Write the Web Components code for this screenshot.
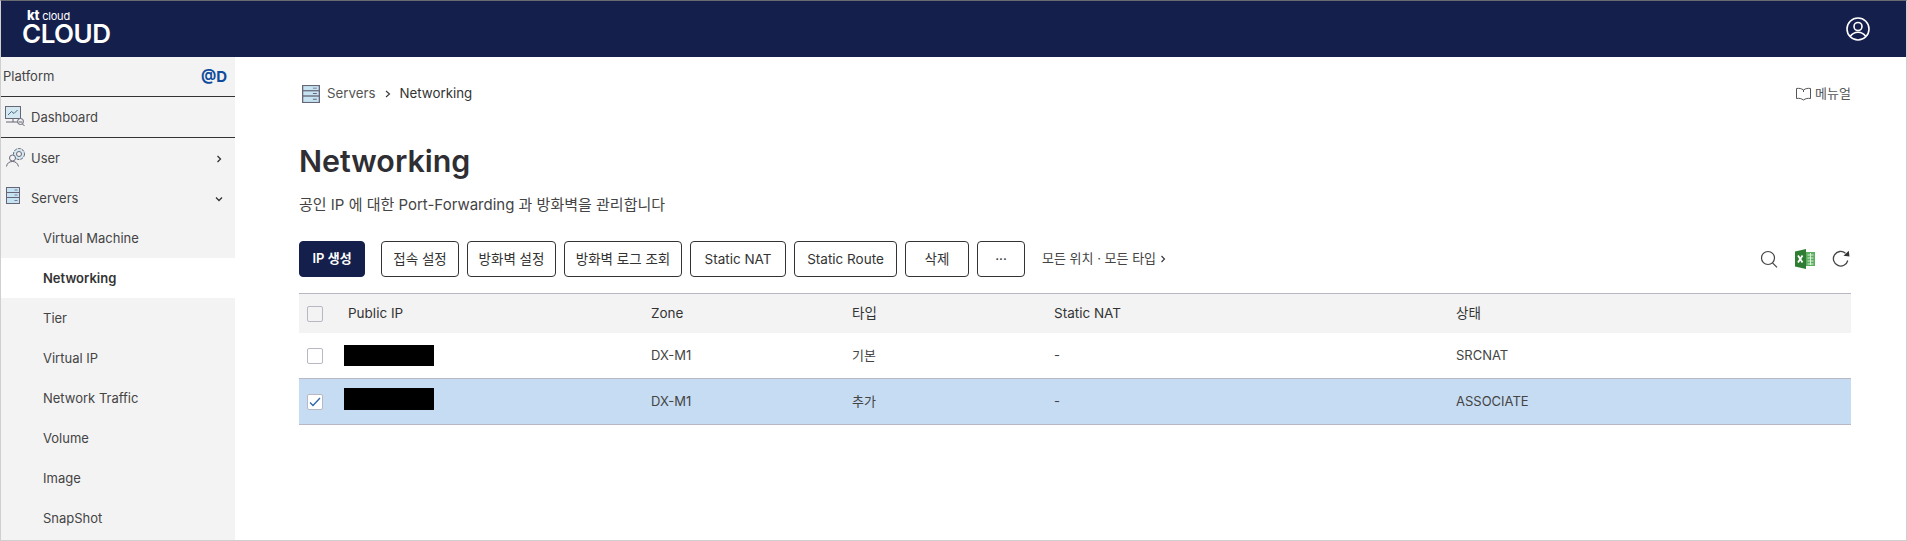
<!DOCTYPE html>
<html lang="ko">
<head>
<meta charset="utf-8">
<title>Networking</title>
<style>
    html, body { margin: 0; height: 100%; }
    body {
        font: 13px/1.2 Inter, "Noto Sans CJK KR", sans-serif;
        color: #333;
        background: #fff;
        overflow: hidden;
    }
</style>
</head>
<body>
<kt-app></kt-app>

<template id="icon-server">
    <svg viewBox="3 1 14 17" preserveAspectRatio="none" fill="#c5e3f2" stroke="#667" stroke-width="1">
        <rect x="3.5" y="1.500" width="13" height="5"/><rect x="3.500" y="6.500" width="13" height="5"/><rect x="3.500" y="11.500" width="13" height="6"/>
        <path d="M11.500 4h3M11.500 9h3M11.500 14.500h3" stroke-width=".8"/>
    </svg>
</template>

<script>
const SERVER_ICON = document.getElementById('icon-server').innerHTML;

class KtHeader extends HTMLElement {
    constructor() {
        super();
        this.attachShadow({ mode: 'open' });
        this.shadowRoot.innerHTML = `
            <style>
                :host {
                    display: flex;
                    align-items: center;
                    justify-content: space-between;
                    height: 56px;
                    background: #141f4b;
                    color: #fff;
                    padding: 0 36px 0 21px;
                    box-sizing: border-box;
                }
                .logo { display: flex; flex-direction: column; padding-bottom: 4px; }
                .small { font-size: 11px; line-height: 13px; padding-left: 5px; letter-spacing: -.2px; }
                .small b { font-size: 13px; font-weight: 800; }
                .big { font-size: 26px; line-height: 22px; font-weight: 600; letter-spacing: -.5px; }
                svg { display: block; }
            </style>
            <div class="logo">
                <span class="small"><b>kt</b> cloud</span>
                <span class="big">CLOUD</span>
            </div>
            <svg width="24" height="24" viewBox="0 0 24 24" fill="none" stroke="#fff" stroke-width="1.600">
                <circle cx="12" cy="12" r="11"/>
                <circle cx="12" cy="9.500" r="4"/>
                <path d="M4.200 19.500c2-3 4.800-4.300 7.800-4.300s5.800 1.300 7.800 4.300"/>
            </svg>
        `;
    }
}

class NavItem extends HTMLElement {
    constructor() {
        super();
        this.attachShadow({ mode: 'open' });
        this.shadowRoot.innerHTML = `
            <style>
                :host {
                    display: flex;
                    align-items: center;
                    box-sizing: border-box;
                    height: 40px;
                    padding: 2px 11px 0 30px;
                    position: relative;
                    color: #444;
                }
                :host([sub]) { padding-left: 42px; }
                :host([active]) { background: #fff; font-weight: 600; color: #333; }
                :host([ruled]) { border-bottom: 1px solid #333; height: 41px; }
                .icon { position: absolute; left: 4px; top: 9px; width: 22px; height: 22px; }
                .text { flex: 1; }
            </style>
            <span class="icon"><slot name="icon"></slot></span>
            <span class="text"><slot></slot></span>
            <slot name="arrow"></slot>
        `;
    }
}

class SideNav extends HTMLElement {
    constructor() {
        super();
        this.attachShadow({ mode: 'open' });
        const right = '<svg slot="arrow" width="10" height="10" viewBox="0 0 10 10" fill="none" stroke="#333" stroke-width="1.300"><path d="M3.500 2l3 3-3 3"/></svg>';
        const down = '<svg slot="arrow" width="10" height="10" viewBox="0 0 10 10" fill="none" stroke="#333" stroke-width="1.300"><path d="M2 3.500l3 3 3-3"/></svg>';
        this.shadowRoot.innerHTML = `
            <style>
                :host {
                    display: block;
                    width: 234px;
                    flex: none;
                    background: #f3f3f3;
                    font-size: 13px;
                    overflow: hidden;
                }
                .platform {
                    display: flex;
                    justify-content: space-between;
                    align-items: center;
                    height: 39px;
                    padding: 0 8px 0 2px;
                    border-bottom: 1px solid #333;
                    color: #444;
                }
                .platform b { color: #0f4c9c; font-size: 15px; font-weight: 700; }
                svg { display: block; }
                .server { display: block; margin-left: 1px; width: 14px; height: 17px; }
                .server svg { width: 14px; height: 17px; }
            </style>
            <div class="platform"><span>Platform</span><b>@D</b></div>
            <nav-item ruled>
                <svg slot="icon" width="22" height="22" viewBox="0 0 22 22" fill="none" stroke="#667" stroke-width="1">
                    <rect x="0.500" y="0.500" width="15" height="12" fill="#d4e8f2"/>
                    <path d="M3 9l3.500-3.500 2.500 2 3.500-3.500" stroke="#4a6a80"/>
                    <path d="M1 16h12M8 13v3"/>
                    <circle cx="15.500" cy="15.500" r="3" fill="#f3f3f3"/>
                    <path d="M13.500 16h4M17.500 18l2 2"/>
                </svg>
                Dashboard
            </nav-item>
            <nav-item>
                <svg slot="icon" width="22" height="22" viewBox="0 0 22 22" fill="none" stroke="#667" stroke-width="1">
                    <circle cx="14" cy="7" r="5.500" stroke-dasharray="3 1" fill="#d4e8f2"/>
                    <circle cx="14" cy="7" r="2.500" fill="#f3f3f3"/>
                    <circle cx="7.500" cy="11" r="3" fill="#f3f3f3"/>
                    <path d="M1.500 19.500c.5-3.500 3-5 6-5s5 1.500 6 5"/>
                </svg>
                User${right}
            </nav-item>
            <nav-item><span class="server" slot="icon">${SERVER_ICON}</span>Servers${down}</nav-item>
            <nav-item sub>Virtual Machine</nav-item>
            <nav-item sub active>Networking</nav-item>
            <nav-item sub>Tier</nav-item>
            <nav-item sub>Virtual IP</nav-item>
            <nav-item sub>Network Traffic</nav-item>
            <nav-item sub>Volume</nav-item>
            <nav-item sub>Image</nav-item>
            <nav-item sub>SnapShot</nav-item>
        `;
    }
}

class PageHead extends HTMLElement {
    constructor() {
        super();
        this.attachShadow({ mode: 'open' });
        this.shadowRoot.innerHTML = `
            <style>
                :host { display: block; }
                .crumbs {
                    display: flex;
                    align-items: center;
                    height: 20px;
                    padding-top: 27px;
                    font-size: 13.300px;
                    color: #555;
                }
                .crumbs .now { color: #333; }
                .crumbs > svg { display: block; margin: 0 7px 0 3px; width: 18px; height: 18px; }
                .crumbs > svg.sep { width: 10px; height: 10px; margin: 0 7px; }
                .manual {
                    margin-left: auto;
                    display: flex;
                    align-items: center;
                    gap: 4px;
                    font-size: 13px;
                    color: #555;
                }
                h1 {
                    margin: 39px 0 0;
                    font-size: 30.400px;
                    line-height: 36px;
                    font-weight: 600;
                    color: #2e2e33;
                }
                p {
                    margin: 16px 0 0;
                    font-size: 15px;
                    line-height: 20px;
                    color: #444;
                }
            </style>
            <div class="crumbs">
                ${SERVER_ICON}
                <span>Servers</span>
                <svg class="sep" viewBox="0 0 10 10" fill="none" stroke="#333" stroke-width="1.100"><path d="M3 2l3.500 3L3 8"/></svg>
                <span class="now">Networking</span>
                <span class="manual">
                    <svg width="15" height="14" viewBox="0 0 15 14" fill="none" stroke="#555" stroke-width="1">
                        <path d="M.5 1.500c2.500-.5 5 0 7 1.500 2-1.500 4.500-2 7-1.500v10c-2.500-.5-5 0-7 1.500-2-1.500-4.500-2-7-1.500zM7.500 3v2"/>
                    </svg>
                    메뉴얼
                </span>
            </div>
            <h1>Networking</h1>
            <p>공인 IP 에 대한 Port-Forwarding 과 방화벽을 관리합니다</p>
        `;
    }
}

class ActionButton extends HTMLElement {
    constructor() {
        super();
        this.attachShadow({ mode: 'open' });
        this.shadowRoot.innerHTML = `
            <style>
                :host {
                    display: flex;
                    align-items: center;
                    justify-content: center;
                    box-sizing: border-box;
                    height: 36px;
                    border: 1px solid #333;
                    border-radius: 4px;
                    background: #fff;
                    color: #333;
                    font-size: 13.500px;
                    white-space: nowrap;
                    flex: none;
                }
                :host([primary]) {
                    background: #141f4b;
                    border-color: #141f4b;
                    color: #fff;
                    font-weight: 600;
                    font-size: 13px;
                    margin-right: 8px;
                }
            </style>
            <slot></slot>
        `;
    }
}

class ActionBar extends HTMLElement {
    constructor() {
        super();
        this.attachShadow({ mode: 'open' });
        this.shadowRoot.innerHTML = `
            <style>
                :host {
                    display: flex;
                    align-items: center;
                    gap: 8px;
                    margin-top: 26px;
                    height: 36px;
                }
                .filter { display: flex; align-items: center; gap: 4px; margin-left: 9px; font-size: 13px; color: #444; }
                .tools { margin-left: auto; margin-right: 1px; display: flex; align-items: center; gap: 17px; }
                svg { display: block; }
            </style>
            <action-button primary style="width:66px">IP 생성</action-button>
            <action-button style="width:78px">접속 설정</action-button>
            <action-button style="width:89px">방화벽 설정</action-button>
            <action-button style="width:118px">방화벽 로그 조회</action-button>
            <action-button style="width:96px">Static NAT</action-button>
            <action-button style="width:103px">Static Route</action-button>
            <action-button style="width:64px">삭제</action-button>
            <action-button style="width:48px">···</action-button>
            <span class="filter">모든 위치 · 모든 타입
                <svg width="6" height="8" viewBox="0 0 6 8" fill="none" stroke="#333" stroke-width="1.100"><path d="M1.500 1l3 3-3 3"/></svg>
            </span>
            <span class="tools">
                <svg width="18" height="18" viewBox="0 0 18 18" fill="none" stroke="#444" stroke-width="1.200">
                    <circle cx="8" cy="8" r="6.500"/><path d="M12.500 12.800l4.500 4.500"/>
                </svg>
                <svg width="20" height="20" viewBox="0 0 20 20">
                    <path d="M0 2.500l11-2.500v20L0 17.500z" fill="#2f7d32"/>
                    <rect x="11" y="3" width="9" height="14" fill="#5cad5f"/>
                    <path d="M12.500 6h6M12.500 9h6M12.500 12h6M12.500 15h6M15.500 4v12" stroke="#d8efd8" stroke-width="1"/>
                    <path d="M3 6.500l4.500 7M7.500 6.500L3 13.500" stroke="#fff" stroke-width="1.800"/>
                </svg>
                <svg width="18" height="18" viewBox="0 0 18 18" fill="none" stroke="#444" stroke-width="1.300">
                    <path d="M15.800 10.500A7.300 7.300 0 1 1 13.500 3.200"/>
                    <path d="M11.500 5.800L17.500 6.500 16.800 .8z" fill="#333" stroke="none"/>
                </svg>
            </span>
        `;
    }
}

class CheckBox extends HTMLElement {
    constructor() {
        super();
        this.attachShadow({ mode: 'open' });
        this.shadowRoot.innerHTML = `
            <style>
                :host {
                    display: flex;
                    align-items: center;
                    justify-content: center;
                    width: 16px;
                    height: 16px;
                    box-sizing: border-box;
                    border: 1px solid #b8b8c4;
                    border-radius: 2px;
                    background: #fff;
                }
                :host([blank]) { background: #f3f3f3; }
                svg { display: none; }
                :host([checked]) svg { display: block; }
            </style>
            <svg width="12" height="10" viewBox="0 0 12 10" fill="none" stroke="#2f64a8" stroke-width="1.300"><path d="M1 5.500l3 3L11 1"/></svg>
        `;
    }
}

class TableRow extends HTMLElement {
    constructor() {
        super();
        this.attachShadow({ mode: 'open' });
        this.shadowRoot.innerHTML = `
            <style>
                :host {
                    display: grid;
                    grid-template-columns: 49px 303px 201px 202px 402px 1fr;
                    align-items: center;
                    box-sizing: border-box;
                    height: 46px;
                    border-bottom: 1px solid #b8b8c4;
                    font-size: 13px;
                    color: #444;
                }
                :host([head]) {
                    height: 40px;
                    background: #f3f3f3;
                    border-top: 1px solid #b8b8c4;
                    border-bottom: 0;
                    font-size: 13.500px;
                    color: #333;
                }
                :host([selected]) { background: #c6dcf2; }
                .box { padding-left: 8px; display: flex; }
                ::slotted(.redact) {
                    display: block;
                    width: 90px;
                    height: 21px;
                    margin-left: -4px;
                    background: #000;
                }
            </style>
            <span class="box"><slot name="check"></slot></span>
            <slot></slot>
        `;
    }
}

class IpTable extends HTMLElement {
    constructor() {
        super();
        this.attachShadow({ mode: 'open' });
        this.shadowRoot.innerHTML = `
            <style>
                :host { display: block; margin-top: 16px; }
            </style>
            <table-row head>
                <check-box slot="check" blank></check-box>
                <span>Public IP</span><span>Zone</span><span>타입</span><span>Static NAT</span><span>상태</span>
            </table-row>
            <table-row>
                <check-box slot="check"></check-box>
                <span class="redact"></span><span>DX-M1</span><span>기본</span><span>-</span><span>SRCNAT</span>
            </table-row>
            <table-row selected>
                <check-box slot="check" checked></check-box>
                <span class="redact" style="margin-bottom:6px;height:22px"></span><span>DX-M1</span><span>추가</span><span>-</span><span>ASSOCIATE</span>
            </table-row>
        `;
    }
}

class KtApp extends HTMLElement {
    constructor() {
        super();
        this.attachShadow({ mode: 'open' });
        this.shadowRoot.innerHTML = `
            <style>
                :host {
                    display: flex;
                    flex-direction: column;
                    box-sizing: border-box;
                    height: 541px;
                    border: 1px solid #cfcfcf;
                    border-top-color: #6a6a72;
                    overflow: hidden;
                }
                .body { display: flex; flex: 1; min-height: 0; }
                main { flex: 1; padding: 0 55px 0 64px; min-width: 0; }
            </style>
            <kt-header></kt-header>
            <div class="body">
                <side-nav></side-nav>
                <main>
                    <page-head></page-head>
                    <action-bar></action-bar>
                    <ip-table></ip-table>
                </main>
            </div>
        `;
    }
}

customElements.define('kt-header', KtHeader);
customElements.define('nav-item', NavItem);
customElements.define('side-nav', SideNav);
customElements.define('page-head', PageHead);
customElements.define('action-button', ActionButton);
customElements.define('action-bar', ActionBar);
customElements.define('check-box', CheckBox);
customElements.define('table-row', TableRow);
customElements.define('ip-table', IpTable);
customElements.define('kt-app', KtApp);
</script>
</body>
</html>
